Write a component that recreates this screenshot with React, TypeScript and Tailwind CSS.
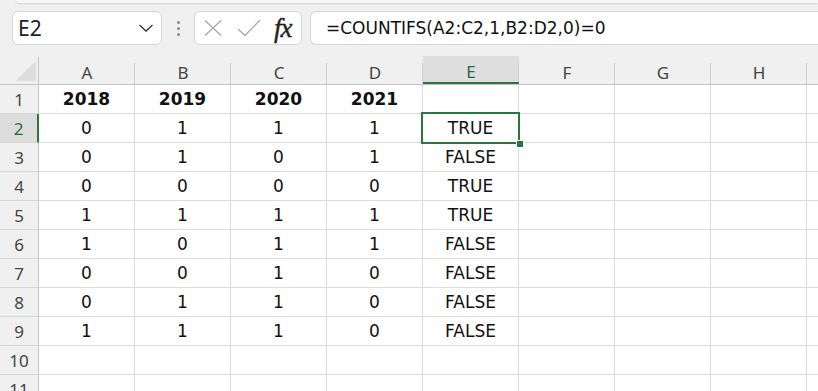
import React from "react";

const cols = ["A", "B", "C", "D", "E", "F", "G", "H"];
const rows: (string | number)[][] = [
  ["2018", "2019", "2020", "2021", ""],
  [0, 1, 1, 1, "TRUE"],
  [0, 1, 0, 1, "FALSE"],
  [0, 0, 0, 0, "TRUE"],
  [1, 1, 1, 1, "TRUE"],
  [1, 0, 1, 1, "FALSE"],
  [0, 0, 1, 0, "FALSE"],
  [0, 1, 1, 0, "FALSE"],
  [1, 1, 1, 0, "FALSE"],
  ["", "", "", "", ""],
  ["", "", "", "", ""],
];

const cellFont = { fontFamily: '"DejaVu Sans", sans-serif' };
const uiFont = { fontFamily: '"Noto Sans", "Open Sans", sans-serif' };

export default function App() {
  return (
    <div className="w-[818px] h-[391px] overflow-hidden bg-[#f0f0f0] flex flex-col">
      {/* top area */}
      <div className="h-[57px] flex flex-col shrink-0">
        <div className="h-[3px] ml-[16px] bg-[#f7f7f7] rounded-bl-[4px] shadow-[0_1px_2px_rgba(0,0,0,0.12)]" />
        <div className="flex items-start pt-[8px] pl-[12px] gap-0">
          {/* Name box */}
          <div className="w-[150px] h-[34px] bg-white border border-[#d6d6d6] rounded-[6px] flex items-center justify-between pl-[5px] pr-[7px]">
            <span className="text-[21px] text-[#222] leading-none" style={uiFont}>
              E2
            </span>
            <svg width="16" height="10" viewBox="0 0 16 10">
              <path d="M1.5 2 L8 8 L14.5 2" fill="none" stroke="#333" strokeWidth="1.3" />
            </svg>
          </div>
          {/* dots */}
          <div className="w-[32px] h-[34px] flex flex-col items-center justify-center gap-[3px]">
            <span className="w-[3px] h-[3px] bg-[#8a8a8a] rounded-full" />
            <span className="w-[3px] h-[3px] bg-[#8a8a8a] rounded-full" />
            <span className="w-[3px] h-[3px] bg-[#8a8a8a] rounded-full" />
          </div>
          {/* fx box */}
          <div className="w-[108px] h-[34px] bg-white border border-[#d6d6d6] rounded-[6px] flex items-center pl-[9px]">
            <svg width="18" height="16" viewBox="0 0 18 16">
              <path d="M1 0.5 L17 15.5 M17 0.5 L1 15.5" stroke="#a8a8a8" strokeWidth="1.3" fill="none" />
            </svg>
            <svg width="24" height="18" viewBox="0 0 24 18" className="ml-[15px]">
              <path d="M1 10 L8 16.5 L23 1" stroke="#a8a8a8" strokeWidth="1.3" fill="none" />
            </svg>
            <span
              className="ml-[13px] text-[27px] italic text-[#222] leading-none tracking-[-1px] [-webkit-text-stroke:0.4px_#222]"
              style={{ fontFamily: '"Liberation Serif", serif' }}
            >
              fx
            </span>
          </div>
          {/* formula */}
          <div className="ml-[8px] flex-1 h-[34px] bg-white border border-[#d6d6d6] border-r-0 rounded-l-[6px] flex items-center pl-[15px]">
            <span className="text-[17px] text-[#111] leading-none" style={cellFont}>
              =COUNTIFS(A2:C2,1,B2:D2,0)=0
            </span>
          </div>
        </div>
      </div>

      {/* grid */}
      <div className="flex flex-col">
        {/* header row */}
        <div className="flex h-[28px] border-b border-[#c4c4c4]">
          <div className="w-[39px] shrink-0 flex items-end justify-end pr-[2px] pb-[3px] border-r border-[#c4c4c4]">
            <svg width="20" height="20" viewBox="0 0 20 20">
              <path d="M20 0 L20 20 L0 20 Z" fill="#dcdcdc" />
            </svg>
          </div>
          {cols.map((c) => {
            const sel = c === "E";
            return (
              <div
                key={c}
                className={
                  "relative w-[96px] shrink-0 flex items-center justify-center pt-[5px] text-[17px] " +
                  (sel
                    ? "bg-[#dedede] text-[#2a6b3a] border-b-2 border-[#2e7440] -mt-px"
                    : "text-[#444]")
                }
                style={uiFont}
              >
                {c}
                <span className="absolute right-0 top-[6px] bottom-0 w-px bg-[#d0d0d0]" />
              </div>
            );
          })}
          <div className="flex-1" />
        </div>

        {rows.map((r, i) => {
          const rn = i + 1;
          const selRow = rn === 2;
          return (
            <div key={rn} className="flex h-[29px] shrink-0">
              <div
                className={
                  "w-[39px] shrink-0 flex items-center justify-center pt-[2px] text-[17px] border-b border-[#d6d6d6] " +
                  (selRow
                    ? "bg-[#dcdcdc] text-[#2a6b3a] border-r-2 border-r-[#2e7440]"
                    : "text-[#444] border-r border-r-[#c4c4c4]")
                }
                style={uiFont}
              >
                {rn}
              </div>
              {cols.map((c, ci) => {
                const v = ci < 5 ? r[ci] : "";
                const isSel = selRow && c === "E";
                return (
                  <div
                    key={c}
                    className={
                      "relative w-[96px] shrink-0 bg-white border-r border-b border-[#dcdcdc] flex items-center justify-center pt-[2px] text-[17px] text-[#111] " +
                      (rn === 1 ? "font-bold " : "") +
                      (isSel ? "z-10" : "")
                    }
                    style={cellFont}
                  >
                    {String(v)}
                    {isSel && (
                      <>
                        <div className="absolute left-[-2px] top-[-2px] w-[99px] h-[32px] border-2 border-[#2e7440]" />
                        <div className="absolute left-[93px] top-[26px] w-[6px] h-[6px] bg-[#2e7440] border border-white box-content" />
                      </>
                    )}
                  </div>
                );
              })}
              <div className="flex-1 bg-white border-b border-[#dcdcdc]" />
            </div>
          );
        })}
      </div>
    </div>
  );
}
